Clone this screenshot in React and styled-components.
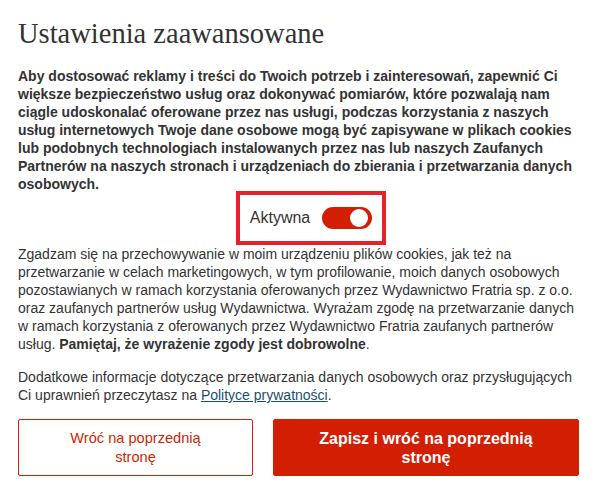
import styled, { createGlobalStyle } from 'styled-components';

const Global = createGlobalStyle`
    body {
        margin: 0;
        background: #fff;
        font-family: "Liberation Sans", Arial, sans-serif;
        color: #333;
    }
`

const Panel = styled.div`
    width: 598px;
    box-sizing: border-box;
    padding: 17px 12px 0 18px;
`

const Title = styled.h1`
    margin: 0 0 16px;
    font-family: "Liberation Serif", "Times New Roman", serif;
    font-weight: 400;
    font-size: 28.5px;
    line-height: 34px;
    color: #333;
`

const Text = styled.p`
    margin: 0;
    font-size: 14px;
    line-height: 18px;
    font-weight: ${p => (p.bold ? 700 : 400)};
    color: #333;
    b { font-weight: 700; }
    a {
        color: #1a4f6e;
        text-decoration: underline;
    }
`

const SwitchRow = styled.div`
    display: flex;
    justify-content: center;
    padding-left: 18px;
    margin: -2px 0 0;
`

const SwitchBox = styled.label`
    display: flex;
    align-items: center;
    gap: 12px;
    height: 46px;
    padding: 0 10px 0 10px;
    border: 4px solid #e8202a;
    font-size: 16px;
    color: #333;
`

const Track = styled.span`
    position: relative;
    width: 50px;
    height: 22px;
    border-radius: 11px;
    background: #d21f04;
`

const Knob = styled.span`
    position: absolute;
    top: 2px;
    right: 4px;
    width: 18px;
    height: 18px;
    border-radius: 50%;
    background: #fff;
`

const Spacer = styled.div`
    height: 15px;
`

const Buttons = styled.div`
    display: grid;
    grid-template-columns: 235px 306px;
    gap: 20px;
    margin-top: 15px;
`

const Button = styled.button`
    height: 57px;
    box-sizing: border-box;
    border-radius: 2px;
    border: 1px solid #d21f04;
    background: ${p => (p.primary ? '#d21f04' : '#fff')};
    color: ${p => (p.primary ? '#fff' : '#d21f04')};
    font-family: "Liberation Sans", Arial, sans-serif;
    font-size: ${p => (p.primary ? '16px' : '14.6px')};
    line-height: 19px;
    font-weight: ${p => (p.primary ? 700 : 400)};
    padding: 0 40px;
    cursor: pointer;
`

export default function App() {
    return (
        <>
            <Global />
            <Panel>
                <Title>Ustawienia zaawansowane</Title>
                <Text bold>
                    Aby dostosować reklamy i treści do Twoich potrzeb i zainteresowań, zapewnić Ci większe bezpieczeństwo usług oraz dokonywać pomiarów, które pozwalają nam ciągle udoskonalać oferowane przez nas usługi, podczas korzystania z naszych usług internetowych Twoje dane osobowe mogą być zapisywane w plikach cookies lub podobnych technologiach instalowanych przez nas lub naszych Zaufanych Partnerów na naszych stronach i urządzeniach do zbierania i przetwarzania danych osobowych.
                </Text>
                <SwitchRow>
                    <SwitchBox>
                        Aktywna
                        <Track><Knob /></Track>
                    </SwitchBox>
                </SwitchRow>
                <Text>
                    Zgadzam się na przechowywanie w moim urządzeniu plików cookies, jak też na przetwarzanie w celach marketingowych, w tym profilowanie, moich danych osobowych pozostawianych w ramach korzystania oferowanych przez Wydawnictwo Fratria sp. z o.o. oraz zaufanych partnerów usług Wydawnictwa. Wyrażam zgodę na przetwarzanie danych w ramach korzystania z oferowanych przez Wydawnictwo Fratria zaufanych partnerów usług. <b>Pamiętaj, że wyrażenie zgody jest dobrowolne</b>.
                </Text>
                <Spacer />
                <Text>
                    Dodatkowe informacje dotyczące przetwarzania danych osobowych oraz przysługujących Ci uprawnień przeczytasz na <a href="#">Polityce prywatności</a>.
                </Text>
                <Buttons>
                    <Button>Wróć na poprzednią stronę</Button>
                    <Button primary>Zapisz i wróć na poprzednią stronę</Button>
                </Buttons>
            </Panel>
        </>
    );
}
